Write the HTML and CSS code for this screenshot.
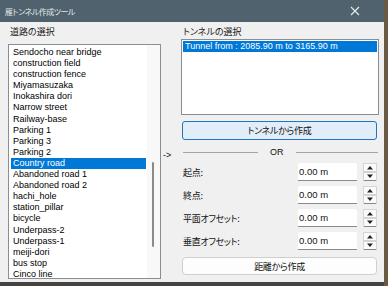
FILE: index.html
```html
<!DOCTYPE html>
<html lang="ja">
<head>
<meta charset="utf-8">
<link rel="stylesheet" href="styles.css">
</head>
<body>
<div class="window">
  <div class="titlebar">
    <span class="title">雁トンネル作成ツール</span>
    <svg class="close" width="10" height="10" viewBox="0 0 10 10"><path d="M1 1L9 9M9 1L1 9" stroke="#e8ecef" stroke-width="1.1"/></svg>
  </div>
  <div class="content">
    <div class="col-left">
      <div class="label">道路の選択</div>
      <div class="road-list">
        <div class="items">
          <div class="item">Sendocho near bridge</div>
          <div class="item">construction field</div>
          <div class="item">construction fence</div>
          <div class="item">Miyamasuzaka</div>
          <div class="item">Inokashira dori</div>
          <div class="item">Narrow street</div>
          <div class="item">Railway-base</div>
          <div class="item">Parking 1</div>
          <div class="item">Parking 3</div>
          <div class="item">Parking 2</div>
          <div class="item sel">Country road</div>
          <div class="item">Abandoned road 1</div>
          <div class="item">Abandoned road 2</div>
          <div class="item">hachi_hole</div>
          <div class="item">station_pillar</div>
          <div class="item">bicycle</div>
          <div class="item">Underpass-2</div>
          <div class="item">Underpass-1</div>
          <div class="item">meiji-dori</div>
          <div class="item">bus stop</div>
          <div class="item">Cinco line</div>
        </div>
        <div class="scroll"><div class="thumb"></div></div>
      </div>
    </div>
    <div class="col-mid">-&gt;</div>
    <div class="col-right">
      <div class="label">トンネルの選択</div>
      <div class="tunnel-list">
        <div class="tunnel-item">Tunnel from : 2085.90 m to 3165.90 m</div>
      </div>
      <div class="btn btn-primary">トンネルから作成</div>
      <div class="or-row">
        <span class="line line-left"></span>
        <span class="or">OR</span>
        <span class="line line-right"></span>
      </div>
      <div class="field-row first">
        <span class="flabel">起点:</span>
        <span class="input"><span class="val">0.00 m</span></span>
        <svg class="spin" width="14" height="18" viewBox="0 0 14 18"><rect x="0.5" y="0.5" width="13" height="8" fill="#fbfbfb" stroke="#d4d4d4"/><rect x="0.5" y="9.5" width="13" height="8" fill="#fbfbfb" stroke="#d4d4d4"/><path d="M4 6.5L7 3L10 6.5Z" fill="#222"/><path d="M4 11.5L7 15L10 11.5Z" fill="#222"/><path d="M1 17.5H13" stroke="#888"/></svg>
      </div>
      <div class="field-row">
        <span class="flabel">終点:</span>
        <span class="input"><span class="val">0.00 m</span></span>
        <svg class="spin" width="14" height="18" viewBox="0 0 14 18"><rect x="0.5" y="0.5" width="13" height="8" fill="#fbfbfb" stroke="#d4d4d4"/><rect x="0.5" y="9.5" width="13" height="8" fill="#fbfbfb" stroke="#d4d4d4"/><path d="M4 6.5L7 3L10 6.5Z" fill="#222"/><path d="M4 11.5L7 15L10 11.5Z" fill="#222"/><path d="M1 17.5H13" stroke="#888"/></svg>
      </div>
      <div class="field-row">
        <span class="flabel">平面オフセット:</span>
        <span class="input"><span class="val">0.00 m</span></span>
        <svg class="spin" width="14" height="18" viewBox="0 0 14 18"><rect x="0.5" y="0.5" width="13" height="8" fill="#fbfbfb" stroke="#d4d4d4"/><rect x="0.5" y="9.5" width="13" height="8" fill="#fbfbfb" stroke="#d4d4d4"/><path d="M4 6.5L7 3L10 6.5Z" fill="#222"/><path d="M4 11.5L7 15L10 11.5Z" fill="#222"/><path d="M1 17.5H13" stroke="#888"/></svg>
      </div>
      <div class="field-row">
        <span class="flabel">垂直オフセット:</span>
        <span class="input"><span class="val">0.00 m</span></span>
        <svg class="spin" width="14" height="18" viewBox="0 0 14 18"><rect x="0.5" y="0.5" width="13" height="8" fill="#fbfbfb" stroke="#d4d4d4"/><rect x="0.5" y="9.5" width="13" height="8" fill="#fbfbfb" stroke="#d4d4d4"/><path d="M4 6.5L7 3L10 6.5Z" fill="#222"/><path d="M4 11.5L7 15L10 11.5Z" fill="#222"/><path d="M1 17.5H13" stroke="#888"/></svg>
      </div>
      <div class="btn btn-secondary">距離から作成</div>
    </div>
  </div>
</div>
<div class="edge"></div>
</body>
</html>
```
FILE: styles.css
```css
html, body {
  margin: 0;
  padding: 0;
}
body {
  background: #45423f;
  display: flex;
  align-items: flex-start;
  height: 286px;
  overflow: hidden;
  font-family: "Liberation Sans", "Noto Sans CJK JP", sans-serif;
  color: #111;
}
.edge {
  width: 4px;
  height: 286px;
  background: #6c5944;
}
.window {
  width: 384px;
  height: 282px;
  background: #f0f0f0;
  display: flex;
  flex-direction: column;
  overflow: hidden;
  flex-shrink: 0;
}
.titlebar {
  height: 22px;
  background: #4f626e;
  color: #e4e9ec;
  display: flex;
  align-items: center;
  justify-content: space-between;
  padding: 0 24px 0 5px;
  font-family: "Noto Sans CJK JP", sans-serif;
  font-size: 8px;
  font-feature-settings: "palt";
  letter-spacing: -0.5px;
}
.close {
  display: block;
}
.content {
  flex: 1;
  display: flex;
  padding: 4px 5px 0 8px;
  min-height: 0;
}
.label {
  font-family: "Noto Sans CJK JP", sans-serif;
  font-size: 9px;
  line-height: 12px;
  height: 12px;
  padding-left: 2px;
  font-feature-settings: "palt";
  color: #1a1a1a;
  white-space: nowrap;
}
.col-left {
  width: 153px;
  display: flex;
  flex-direction: column;
}
.road-list {
  margin-top: 6px;
  height: 235px;
  box-sizing: border-box;
  border: 1px solid #8a8d92;
  background: #fff;
  display: flex;
}
.items {
  flex: 1;
  overflow: hidden;
  padding-top: 2px;
}
.item {
  height: 11.1px;
  line-height: 11px;
  font-size: 9px;
  padding-left: 2px;
  margin: 0 1px 0 2px;
  white-space: nowrap;
  color: #000;
}
.item.sel {
  background: #0078d7;
  color: #fff;
}
.scroll {
  width: 13px;
  background: #f8f8f8;
  display: flex;
  flex-direction: column;
}
.thumb {
  margin-top: 117px;
  margin-left: 5px;
  width: 2px;
  height: 85px;
  border-radius: 1px;
  background: #8a8a8a;
}
.col-mid {
  width: 20px;
  padding-top: 123px;
  padding-left: 2px;
  box-sizing: border-box;
  font-size: 9px;
  line-height: 12px;
}
.col-right {
  width: 198px;
  display: flex;
  flex-direction: column;
}
.tunnel-list {
  margin-top: 1px;
  height: 76px;
  box-sizing: border-box;
  border: 1px solid #8a8d92;
  background: #fff;
  padding: 1px;
}
.tunnel-item {
  height: 11px;
  line-height: 11px;
  font-size: 9px;
  background: #0078d7;
  color: #fff;
  padding-left: 2px;
  white-space: nowrap;
}
.btn {
  box-sizing: border-box;
  margin: 6px 2px 0 1px;
  height: 19px;
  display: flex;
  align-items: center;
  justify-content: center;
  font-family: "Noto Sans CJK JP", sans-serif;
  font-size: 9px;
  font-feature-settings: "palt";
  letter-spacing: -0.3px;
  color: #111;
}
.btn-primary {
  border: 1px solid #1f74c4;
  border-radius: 3px;
  background: #e1eefa;
}
.btn-secondary {
  margin-top: 7px;
  height: 18px;
  border: 1px solid #cfcfcf;
  border-radius: 4px;
  background: #fdfdfd;
}
.or-row {
  margin-top: 5px;
  height: 14px;
  display: flex;
  align-items: center;
  padding: 0 1px 0 2px;
}
.line {
  height: 1px;
  background: #a4a4a4;
}
.line-left {
  width: 75px;
}
.line-right {
  flex: 1;
}
.or {
  margin: 0 12px;
  font-size: 9px;
  line-height: 12px;
}
.field-row {
  display: flex;
  align-items: center;
  height: 18px;
  margin-top: 5px;
}
.field-row.first {
  margin-top: 4px;
}
.flabel {
  flex: 1;
  padding-left: 2px;
  font-family: "Noto Sans CJK JP", sans-serif;
  font-size: 9px;
  font-feature-settings: "palt";
  letter-spacing: -0.3px;
  white-space: nowrap;
}
.input {
  width: 59px;
  height: 18px;
  box-sizing: border-box;
  background: #fff;
  border-bottom: 1px solid #8a8a8a;
  border-radius: 2px 2px 0 0;
  overflow: hidden;
  display: flex;
  align-items: center;
}
.val {
  padding-left: 1px;
  font-size: 9.5px;
  white-space: nowrap;
}
.spin {
  display: block;
  margin: 0 2px 0 6px;
}
```
